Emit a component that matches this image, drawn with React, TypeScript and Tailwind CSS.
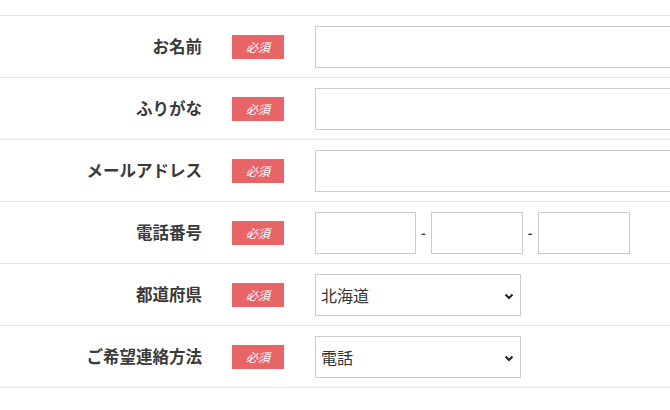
import React from "react";

const font = { fontFamily: '"Noto Sans CJK JP", "Noto Sans", sans-serif' };

function Badge() {
  return (
    <span className="flex h-[24px] w-[52px] shrink-0 items-center justify-center bg-[#e96467] text-[12px] italic leading-none text-white">
      必須
    </span>
  );
}

function Row({ label, children }: { label: string; children: React.ReactNode }) {
  return (
    <div className="flex h-[62px] items-center border-b border-[#e3e3e3]">
      <div className="w-[202px] shrink-0 text-right text-[16.5px] font-bold text-[#3a3a3a]">{label}</div>
      <div className="ml-[30px] mr-[31px]">
        <Badge />
      </div>
      <div className="flex items-center">{children}</div>
    </div>
  );
}

function Chevron() {
  return (
    <svg width="10" height="7" viewBox="0 0 10 7" className="pointer-events-none absolute right-[6px] top-[18px]">
      <path d="M1.5 1.5 L5 5 L8.5 1.5" fill="none" stroke="#222" strokeWidth="2" />
    </svg>
  );
}

function Select({ value }: { value: string }) {
  return (
    <div className="relative h-[42px] w-[206px] border border-[#cccccc] bg-white">
      <div className="flex h-full items-center pl-[5px] text-[16px] text-[#333]">{value}</div>
      <Chevron />
    </div>
  );
}

export default function App() {
  return (
    <div className="h-[410px] w-[670px] overflow-hidden bg-white" style={font}>
      <div className="h-[16px] border-b border-[#e3e3e3]" />
      <Row label="お名前">
        <div className="h-[42px] w-[400px] border border-[#cccccc]" />
      </Row>
      <Row label="ふりがな">
        <div className="h-[42px] w-[400px] border border-[#cccccc]" />
      </Row>
      <Row label="メールアドレス">
        <div className="h-[42px] w-[400px] border border-[#cccccc]" />
      </Row>
      <Row label="電話番号">
        <div className="h-[42px] w-[101px] border border-[#cccccc]" />
        <span className="mx-[5px] text-[13px] font-bold text-[#333]">-</span>
        <div className="h-[42px] w-[92px] border border-[#cccccc]" />
        <span className="mx-[5px] text-[13px] font-bold text-[#333]">-</span>
        <div className="h-[42px] w-[92px] border border-[#cccccc]" />
      </Row>
      <Row label="都道府県">
        <Select value="北海道" />
      </Row>
      <Row label="ご希望連絡方法">
        <Select value="電話" />
      </Row>
    </div>
  );
}
